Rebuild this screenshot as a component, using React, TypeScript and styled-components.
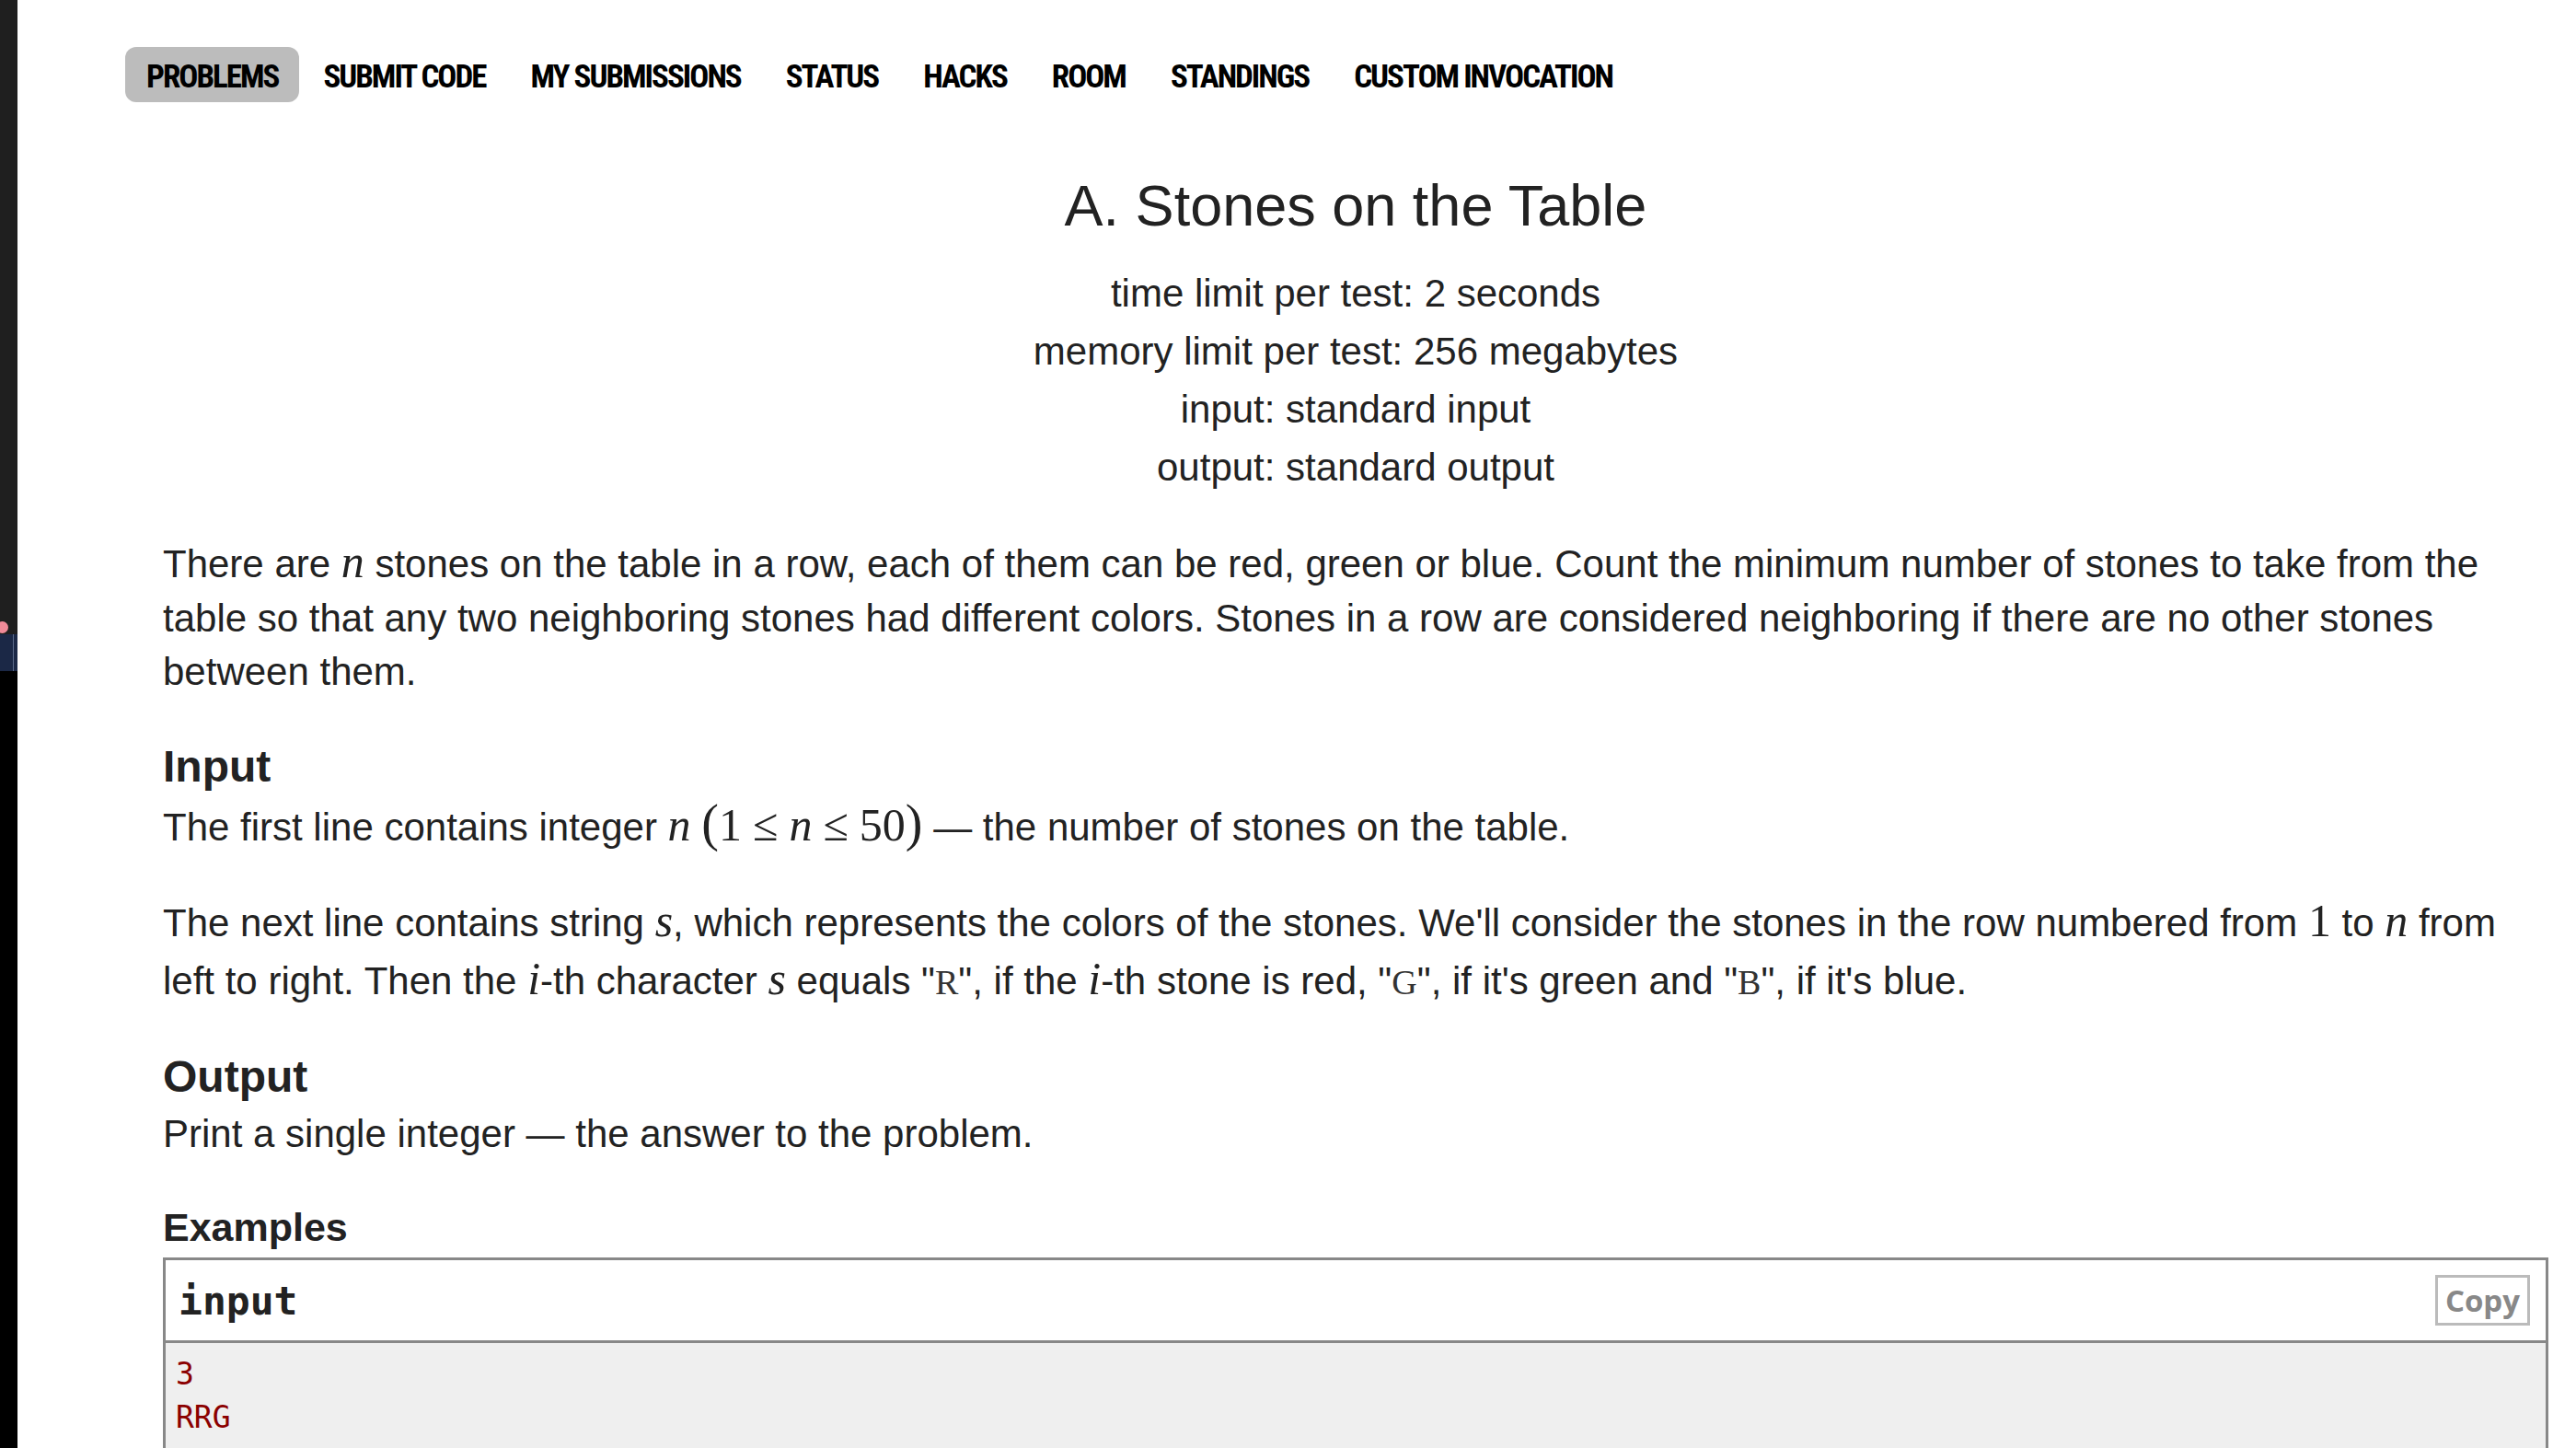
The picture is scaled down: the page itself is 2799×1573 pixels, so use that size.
import React from "react";
import styled, { createGlobalStyle } from "styled-components";

const GlobalStyle = createGlobalStyle`
  html, body {
    margin: 0;
    padding: 0;
    background: #fff;
  }
  body {
    font-family: "Liberation Sans", Arial, sans-serif;
    color: #222;
  }
`;

const Page = styled.div`
  display: flex;
  height: 1573px;
  overflow: hidden;
`;

const Strip = styled.aside`
  flex: none;
  width: 19px;
  display: flex;
  flex-direction: column;
  background: #000;
`;

const StripTop = styled.div`
  position: relative;
  height: 689px;
  background: #1f1f1f;
`;

const Badge = styled.span`
  position: absolute;
  left: -4px;
  bottom: 1px;
  width: 13px;
  height: 13px;
  border-radius: 50%;
  background: #f08a98;
`;

const StripTab = styled.div`
  height: 40px;
  background: linear-gradient(
    to right,
    #1b2846 14px,
    #5d6b8a 14px,
    #5d6b8a 15px,
    #1b2846 15px
  );
`;

const Main = styled.main`
  flex: 1;
  min-width: 0;
  padding: 51px 30px 0 0;
`;

const Menu = styled.nav`
  display: flex;
  gap: 3px;
  height: 60px;
  padding-left: 117px;
`;

const MenuItem = styled.a<{ $active?: boolean }>`
  display: flex;
  align-items: center;
  padding: 4px 23px 0;
  border-radius: 12px;
  background: ${({ $active }) => ($active ? "#bcbcbc" : "transparent")};
  font-family: "Ubuntu Condensed", "Roboto Condensed", "Liberation Sans Narrow",
    "DejaVu Sans Condensed", "Open Sans Condensed", "Liberation Sans", sans-serif;
  font-stretch: condensed;
  font-weight: 700;
  font-size: 35px;
  letter-spacing: -2px;
  color: #000;
  text-decoration: none;
  white-space: nowrap;
`;

const Statement = styled.article`
  padding-left: 158px;
`;

const Header = styled.header`
  margin: 77px 0 45px;
  text-align: center;
`;

const Title = styled.h1`
  margin: 0 0 29px;
  font-size: 63px;
  line-height: 70px;
  font-weight: normal;
  color: #222;
`;

const Property = styled.div`
  font-size: 42px;
  line-height: 63px;
`;

const Section = styled.section`
  margin-bottom: 44px;
`;

const SectionTitle = styled.h2<{ $small?: boolean }>`
  margin: 0 0 ${({ $small }) => ($small ? "8px" : "4px")};
  padding-top: ${({ $small }) => ($small ? "2px" : "0")};
  font-size: ${({ $small }) => ($small ? "43px" : "48px")};
  line-height: ${({ $small }) => ($small ? "50px" : "58px")};
  font-weight: bold;
  color: #222;
`;

const Paragraph = styled.p<{ $tall?: boolean }>`
  margin: 0 0 43px;
  font-size: 42px;
  line-height: ${({ $tall }) => ($tall ? "63px" : "58.5px")};

  &:last-child {
    margin-bottom: 0;
  }
`;

const MathVar = styled.span`
  font-family: "Liberation Serif", "Times New Roman", serif;
  font-style: italic;
  font-size: 50px;
  line-height: 1;
`;

const MathNum = styled.span`
  font-family: "Liberation Serif", "Times New Roman", serif;
  font-size: 50px;
  line-height: 1;
`;

const MathParen = styled.span`
  font-family: "Liberation Serif", "Times New Roman", serif;
  font-size: 56px;
  line-height: 1;
`;

const MathRel = styled.span`
  font-family: "Liberation Serif", "Times New Roman", serif;
  font-size: 50px;
  line-height: 1;
  margin: 0 0.24em;
`;

const Tt = styled.span`
  font-family: "Liberation Serif", "Times New Roman", serif;
  font-size: 38px;
  line-height: 1;
  color: #333;
`;

const SampleBox = styled.div`
  border: 3px solid #888;
`;

const SampleHeader = styled.div`
  display: flex;
  align-items: center;
  justify-content: space-between;
  height: 87px;
  padding: 0 17px 0 14px;
  border-bottom: 3px solid #888;
  background: #fff;
`;

const SampleTitle = styled.div`
  padding-top: 2px;
  font-family: "DejaVu Sans Mono", "Liberation Mono", monospace;
  font-weight: bold;
  font-size: 43px;
  line-height: 85px;
  color: #222;
`;

const CopyButton = styled.button`
  height: 55px;
  padding: 0 8px;
  border: 3px solid #bbb;
  border-radius: 0;
  background: #fff;
  font-family: "Open Sans", "Liberation Sans", sans-serif;
  font-weight: 700;
  font-size: 33px;
  line-height: 1;
  color: #888;
`;

const SampleBody = styled.pre`
  margin: 0;
  padding: 10px 11px 40px;
  background: #efefef;
  font-family: "DejaVu Sans Mono", "Liberation Mono", monospace;
  font-size: 33px;
  line-height: 47px;
  color: #8b0000;
`;

const menu = [
  "PROBLEMS",
  "SUBMIT CODE",
  "MY SUBMISSIONS",
  "STATUS",
  "HACKS",
  "ROOM",
  "STANDINGS",
  "CUSTOM INVOCATION",
];

export default function App() {
  return (
    <>
      <GlobalStyle />
      <Page>
        <Strip>
          <StripTop>
            <Badge />
          </StripTop>
          <StripTab />
        </Strip>
        <Main>
          <Menu>
            {menu.map((item, i) => (
              <MenuItem key={item} $active={i === 0}>
                {item}
              </MenuItem>
            ))}
          </Menu>

          <Statement>
            <Header>
              <Title>A. Stones on the Table</Title>
              <Property>time limit per test: 2 seconds</Property>
              <Property>memory limit per test: 256 megabytes</Property>
              <Property>input: standard input</Property>
              <Property>output: standard output</Property>
            </Header>

            <Section>
              <Paragraph>
                There are <MathVar>n</MathVar> stones on the table in a row, each of them can be
                red, green or blue. Count the minimum number of stones to take from the table so
                that any two neighboring stones had different colors. Stones in a row are
                considered neighboring if there are no other stones between them.
              </Paragraph>
            </Section>

            <Section>
              <SectionTitle>Input</SectionTitle>
              <Paragraph>
                The first line contains integer <MathVar>n</MathVar>{" "}
                <MathParen>(</MathParen>
                <MathNum>1</MathNum>
                <MathRel>≤</MathRel>
                <MathVar>n</MathVar>
                <MathRel>≤</MathRel>
                <MathNum>50</MathNum>
                <MathParen>)</MathParen> — the number of stones on the table.
              </Paragraph>
              <Paragraph $tall>
                The next line contains string <MathVar>s</MathVar>, which represents the colors of
                the stones. We'll consider the stones in the row numbered from{" "}
                <MathNum>1</MathNum> to <MathVar>n</MathVar> from left to right. Then the{" "}
                <MathVar>i</MathVar>-th character <MathVar>s</MathVar> equals "<Tt>R</Tt>", if the{" "}
                <MathVar>i</MathVar>-th stone is red, "<Tt>G</Tt>", if it's green and "
                <Tt>B</Tt>", if it's blue.
              </Paragraph>
            </Section>

            <Section>
              <SectionTitle>Output</SectionTitle>
              <Paragraph>Print a single integer — the answer to the problem.</Paragraph>
            </Section>

            <Section>
              <SectionTitle $small>Examples</SectionTitle>
              <SampleBox>
                <SampleHeader>
                  <SampleTitle>input</SampleTitle>
                  <CopyButton>Copy</CopyButton>
                </SampleHeader>
                <SampleBody>{"3\nRRG"}</SampleBody>
              </SampleBox>
            </Section>
          </Statement>
        </Main>
      </Page>
    </>
  );
}
